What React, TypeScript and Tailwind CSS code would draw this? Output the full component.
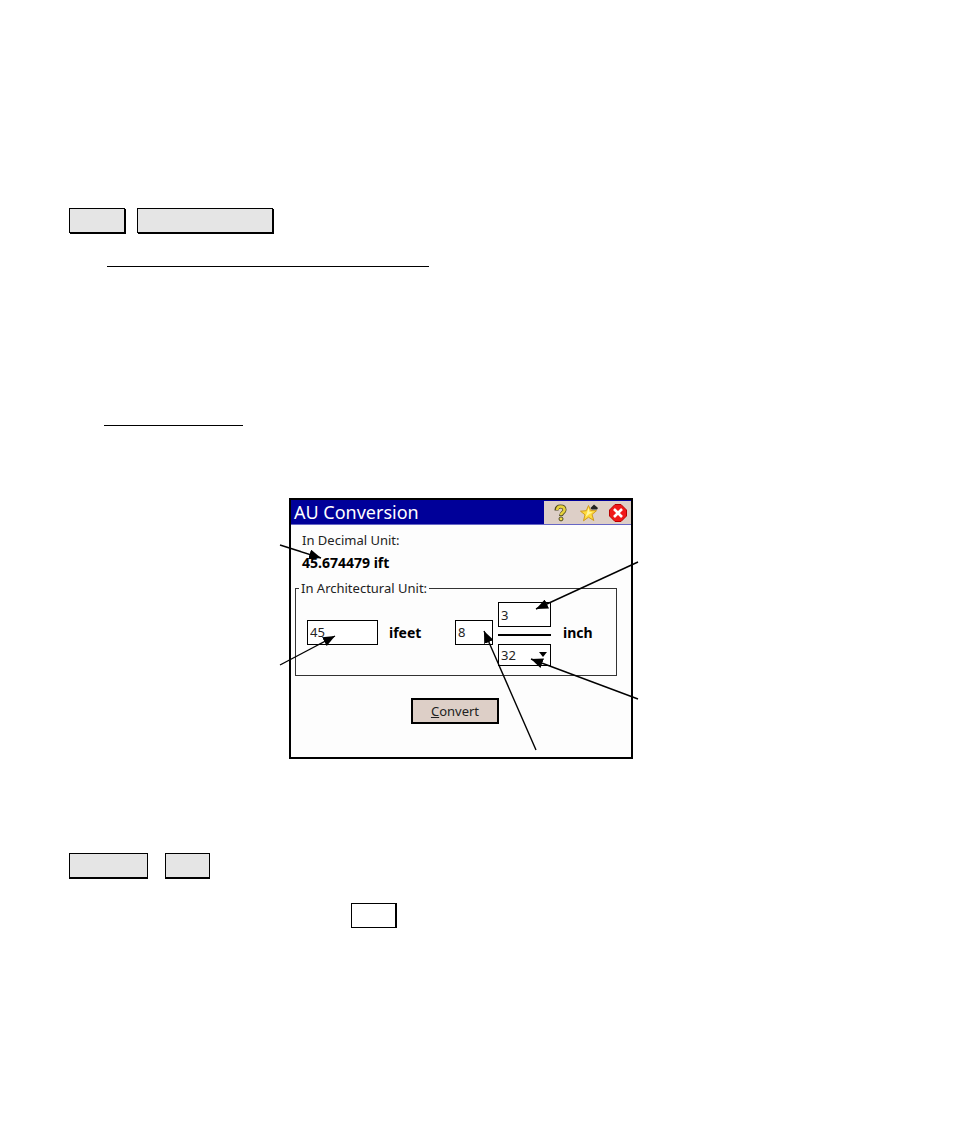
import { useState } from "react";

export default function App() {
  return (
    <main className="min-h-screen w-full bg-white pt-[208px] font-['Noto_Sans',sans-serif] text-black">
      {/* ================= HEADING KEYS ================= */}
      <div className="flex gap-3 pl-[69px]">
        <KeyBox className="w-14 bg-[#e5e5e5] shadow-[1px_1px_0_#000]" />
        <KeyBox className="w-[136px] bg-[#e5e5e5] shadow-[1px_1px_0_#000]" />
      </div>

      <hr className="mt-[33px] ml-[107px] w-[322px] border-t border-black" />
      <hr className="mt-[158px] ml-[104px] w-[139px] border-t border-black" />

      {/* ================= DIALOG ================= */}
      <div className="mt-[72px] pl-[289px]">
        <ConversionDialog />
      </div>

      {/* ================= FOOTER KEYS ================= */}
      <div className="mt-[94px] flex gap-[17px] pl-[69px]">
        <KeyBox className="w-[79px] bg-[#e5e5e5] shadow-[0_1px_0_#000]" />
        <KeyBox className="w-[45px] bg-[#e5e5e5] shadow-[0_1px_0_#000]" />
      </div>
      <div className="mt-[25px] pl-[351px]">
        <KeyBox className="w-[45px] bg-white shadow-[1px_0_0_#000]" />
      </div>
    </main>
  );
}

/* ===================== COMPONENTS ===================== */

function KeyBox({ className }: { className: string }) {
  return <div className={`h-[25px] border border-black ${className}`} />;
}

function ConversionDialog() {
  const [feet, setFeet] = useState("45");
  const [inches, setInches] = useState("8");
  const [numerator, setNumerator] = useState("3");

  return (
    <section className="relative w-[344px] border-2 border-black bg-[#fdfdfd] pb-[33px]">
      <header className="flex h-[25px] items-stretch border-b border-[#6666c4] bg-[#000099]">
        <h1 className="flex-1 pl-[3px] text-[18px] leading-6 text-white">AU Conversion</h1>
        <div className="mt-px flex w-[87px] items-center justify-between bg-[#ddcfc7] pr-1 pl-2">
          <button type="button" aria-label="Help">
            <HelpIcon />
          </button>
          <button type="button" aria-label="Favorites">
            <StarIcon />
          </button>
          <button type="button" aria-label="Close">
            <CloseIcon />
          </button>
        </div>
      </header>

      <div className="px-[11px] pt-[3px]">
        <p className="text-[13px] leading-6 text-[#222]">In Decimal Unit:</p>
        <p className="text-[14px] leading-[22px] font-bold">45.674479 ift</p>
      </div>

      <fieldset className="mt-1 mr-[14px] ml-1 border border-[#333] px-[11px] pb-[9px] text-[13px] text-[#222]">
        <legend className="-ml-2 px-[2px] leading-5">In Architectural Unit:</legend>
        <div className="flex items-center pt-1">
          <input
            id="feet"
            value={feet}
            onChange={(e) => setFeet(e.target.value)}
            className="mb-1 h-[25px] w-[71px] border border-black bg-white px-[2px] outline-none"
          />
          <label htmlFor="feet" className="mb-1 ml-[11px] flex-1 text-[14px] font-bold text-black">
            ifeet
          </label>
          <input
            aria-label="Inches"
            value={inches}
            onChange={(e) => setInches(e.target.value)}
            className="mb-1 h-[25px] w-[38px] border border-black bg-white px-[2px] outline-none"
          />
          <div className="mr-3 ml-[5px] flex w-[53px] flex-col">
            <input
              id="numerator"
              value={numerator}
              onChange={(e) => setNumerator(e.target.value)}
              className="h-[25px] w-full border border-black bg-white px-[2px] outline-none"
            />
            <div className="mt-[7px] mb-2 h-[2px] bg-black" />
            <div className="relative">
              <select
                aria-label="Denominator"
                defaultValue="32"
                className="block h-[22px] w-full appearance-none border border-black bg-white px-[2px] leading-5 outline-none"
              >
                <option>8</option>
                <option>16</option>
                <option>32</option>
                <option>64</option>
              </select>
              <svg viewBox="0 0 8 5" className="pointer-events-none absolute top-2 right-1 h-[5px] w-2">
                <path d="M0 0h8L4 5z" />
              </svg>
            </div>
          </div>
          <label htmlFor="numerator" className="mb-1 w-[42px] text-[14px] font-bold text-black">
            inch
          </label>
        </div>
      </fieldset>

      <div className="mt-[22px] flex pl-[120px]">
        <button
          type="button"
          className="h-[26px] w-[88px] border-2 border-black bg-[#ddcfc7] text-[13px] leading-5 text-[#222]"
        >
          <span className="underline">C</span>onvert
        </button>
      </div>

      <Callouts />
    </section>
  );
}

// pointers from the margin to each field, drawn over the dialog
function Callouts() {
  return (
    <svg
      viewBox="0 0 370 261"
      className="pointer-events-none absolute -top-[2px] -left-[17px] h-[261px] w-[370px] max-w-none"
      stroke="#000"
      strokeWidth="1.4"
      aria-hidden="true"
    >
      <defs>
        <marker
          id="head"
          viewBox="0 0 12 10"
          refX="12"
          refY="5"
          markerWidth="12"
          markerHeight="10"
          markerUnits="userSpaceOnUse"
          orient="auto"
        >
          <path d="M0 0l12 5L0 10z" stroke="none" />
        </marker>
      </defs>
      <path d="M6 47L47 60" markerEnd="url(#head)" />
      <path d="M6 167L61 138" markerEnd="url(#head)" />
      <path d="M364 64L262 111" markerEnd="url(#head)" />
      <path d="M364 201L257 161" markerEnd="url(#head)" />
      <path d="M262 252L210 133" markerEnd="url(#head)" />
    </svg>
  );
}

function HelpIcon() {
  return (
    <svg viewBox="0 0 18 18" className="h-[18px] w-[18px]" fill="none">
      <path d="M4.500 6.500c0-3 1.500-4 4-4s4 1.200 4 3.400c0 2.600-3.500 2.600-3.500 6.100" stroke="#4d4820" strokeWidth="4" />
      <path d="M5.200 6c0-2.500 1.200-3.500 3.300-3.500s4 1.200 4 3.400c0 2.600-3.500 2.600-3.500 5.300" stroke="#e6d23c" strokeWidth="2.600" />
      <circle cx="9" cy="14.900" r="2" fill="#f0dc48" stroke="#4d4820" />
    </svg>
  );
}

function StarIcon() {
  return (
    <svg viewBox="0 0 20 18" className="h-[18px] w-5">
      <path
        d="M8.500 1.500l2.200 5 5.800.2-4.500 3.800 1.800 6-5.300-3.300-5 3.600 1.500-6-4.500-3.600 5.800-.5z"
        fill="#ffdc3c"
        stroke="#d09a20"
      />
      <path d="M8.500 3.500l1 4.500 3 .2-3.500 2L5.500 13 7 9z" fill="#fff6a0" />
      <path d="M14 .5l4 3.500-1 1.500h-5.500l-1-1.500z" fill="#222" />
    </svg>
  );
}

function CloseIcon() {
  return (
    <svg viewBox="0 0 18 18" className="h-[18px] w-[18px]">
      <path d="M6 .5h6L17.500 6v6L12 17.500H6L.5 12V6z" fill="#f01818" stroke="#b80000" strokeLinejoin="round" />
      <path d="M5 5l8 8M13 5l-8 8" stroke="#fff" strokeWidth="2.600" />
    </svg>
  );
}
